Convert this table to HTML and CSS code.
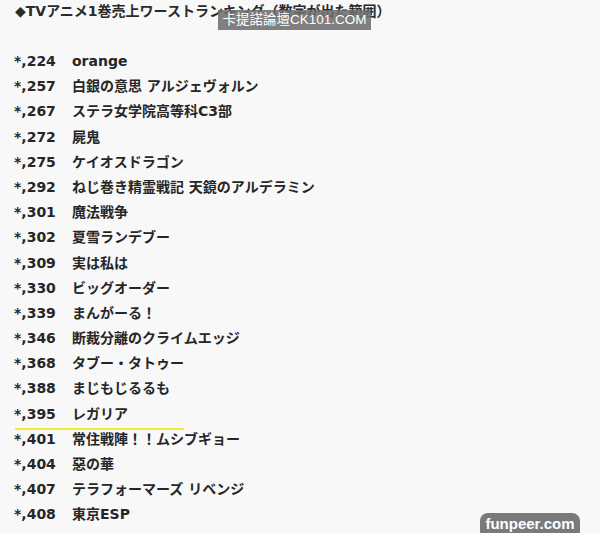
FILE: index.html
```html
<!DOCTYPE html>
<html>
  <head>
    <link rel="stylesheet" href="styles.css">
  </head>
  <body>
    <div class="page">
      <h4 class="title">◆TVアニメ1巻売上ワーストランキング（数字が出た範囲）</h4>
      <div class="mark-ck">卡提諾論壇CK101.COM</div>
      <ul class="rank">
        <li><span class="num">*,224</span><span>orange</span></li>
        <li><span class="num">*,257</span><span>白銀の意思 アルジェヴォルン</span></li>
        <li><span class="num">*,267</span><span>ステラ女学院高等科C3部</span></li>
        <li><span class="num">*,272</span><span>屍鬼</span></li>
        <li><span class="num">*,275</span><span>ケイオスドラゴン</span></li>
        <li><span class="num">*,292</span><span>ねじ巻き精霊戦記 天鏡のアルデラミン</span></li>
        <li><span class="num">*,301</span><span>魔法戦争</span></li>
        <li><span class="num">*,302</span><span>夏雪ランデブー</span></li>
        <li><span class="num">*,309</span><span>実は私は</span></li>
        <li><span class="num">*,330</span><span>ビッグオーダー</span></li>
        <li><span class="num">*,339</span><span>まんがーる！</span></li>
        <li><span class="num">*,346</span><span>断裁分離のクライムエッジ</span></li>
        <li><span class="num">*,368</span><span>タブー・タトゥー</span></li>
        <li><span class="num">*,388</span><span>まじもじるるも</span></li>
        <li class="marked"><span class="num">*,395</span><span>レガリア</span></li>
        <li><span class="num">*,401</span><span>常住戦陣！！ムシブギョー</span></li>
        <li><span class="num">*,404</span><span>惡の華</span></li>
        <li><span class="num">*,407</span><span>テラフォーマーズ リベンジ</span></li>
        <li><span class="num">*,408</span><span>東京ESP</span></li>
      </ul>
      <div class="mark-fp">funpeer.com</div>
    </div>
  </body>
</html>
```

FILE: styles.css
```css
* {
  margin: 0;
  padding: 0;
}

body {
  background: #f8f8f8;
  font-family: "DejaVu Sans", "Noto Sans CJK JP", sans-serif;
  color: #262626;
}

.page {
  position: relative;
  width: 600px;
  height: 533px;
  overflow: hidden;
}

.title {
  font-size: 14px;
  font-weight: bold;
  line-height: 22px;
  padding-left: 15px;
  color: #2a2a2a;
}

.mark-ck {
  position: absolute;
  left: 218px;
  top: 10px;
  width: 153px;
  height: 20px;
  background: rgba(110, 110, 110, 0.88);
  color: #fff;
  font-family: "Liberation Sans", "Noto Sans CJK TC", sans-serif;
  font-size: 13.5px;
  line-height: 20px;
  text-align: center;
  white-space: nowrap;
  overflow: hidden;
}

.rank {
  list-style: none;
  margin-top: 27px;
  padding-left: 14px;
}

.rank li {
  display: flex;
  height: 25.2px;
  line-height: 25.2px;
  font-size: 14px;
  font-weight: bold;
}

.rank .num {
  width: 58px;
  flex: none;
}

.rank .marked {
  position: relative;
}

.rank .marked::after {
  content: "";
  position: absolute;
  left: 1px;
  top: 26px;
  width: 169px;
  height: 2px;
  background: #f4ee3a;
}

.mark-fp {
  position: absolute;
  left: 480px;
  top: 513px;
  width: 100px;
  height: 26px;
  border-radius: 8px;
  background: #7a7a7a;
  color: #fff;
  font-family: "Liberation Sans", sans-serif;
  font-weight: bold;
  font-size: 15px;
  line-height: 21px;
  text-align: center;
}
```
